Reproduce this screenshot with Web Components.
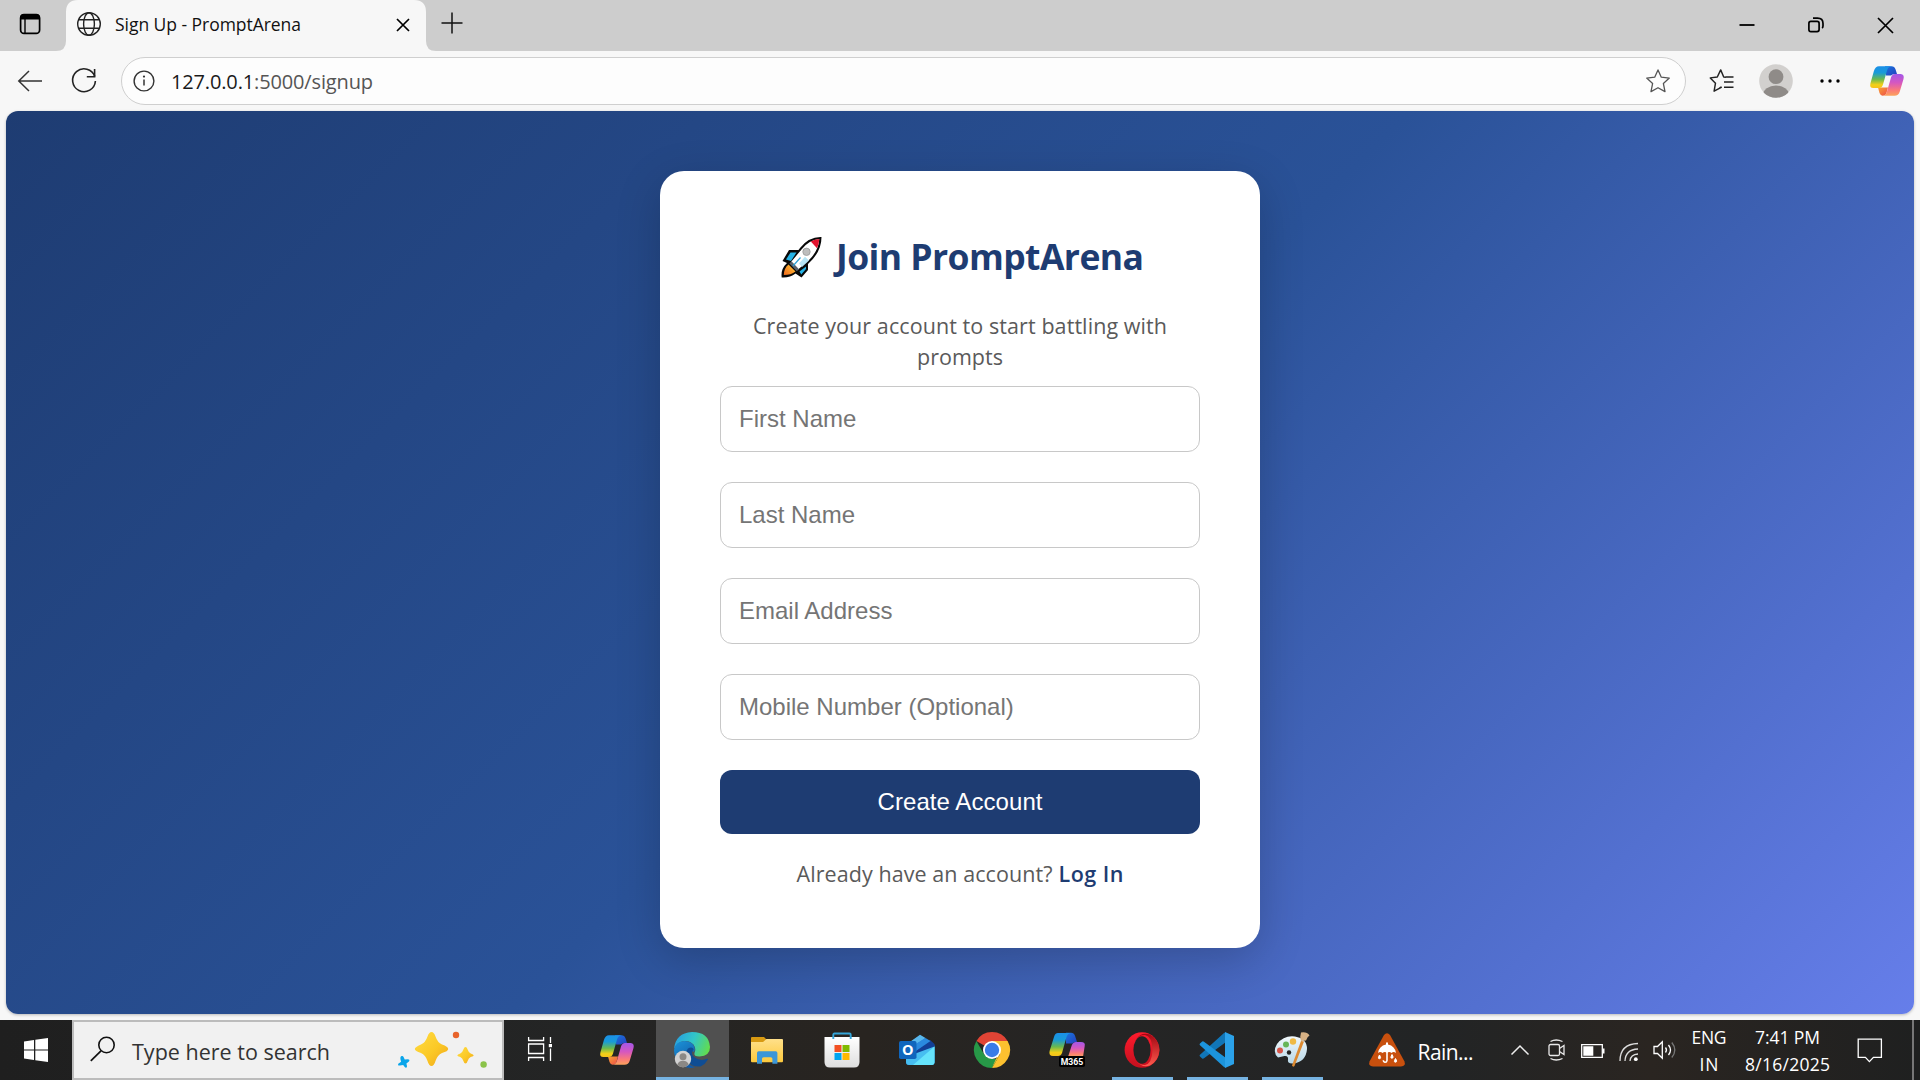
<!DOCTYPE html>
<html lang="en">
<head>
<meta charset="utf-8">
<title>Sign Up - PromptArena</title>
<style>
html,body{margin:0;height:100%;overflow:hidden}
body{font-family:"Open Sans","Noto Sans",sans-serif;background:#f7f7f7}
</style>
</head>
<body>
<app-desktop></app-desktop>
<script>
const mount = (el, html) => { el.attachShadow({mode:'open'}).innerHTML = html; };
const define = (name, html) => customElements.define(name, class extends HTMLElement {
  connectedCallback(){ if(!this.shadowRoot) mount(this, html); }
});

const copilotDefs = `<defs>
<linearGradient id="ca" x1="0" y1="0" x2="0" y2="1"><stop offset="0" stop-color="#1b8fe8"/><stop offset=".3" stop-color="#189bd8"/><stop offset=".6" stop-color="#6ab94e"/><stop offset=".85" stop-color="#f3d018"/><stop offset="1" stop-color="#f5c21b"/></linearGradient>
<linearGradient id="cb" x1="0" y1="0" x2="0" y2="1"><stop offset="0" stop-color="#a357e8"/><stop offset=".4" stop-color="#d557c0"/><stop offset=".75" stop-color="#fb7b78"/><stop offset="1" stop-color="#fba45c"/></linearGradient>
<linearGradient id="cc" x1="0" y1="0" x2="1" y2="1"><stop offset="0" stop-color="#1a75dc"/><stop offset="1" stop-color="#2440c0"/></linearGradient>
<linearGradient id="cd" x1="0" y1="0" x2="1" y2="1"><stop offset="0" stop-color="#f8a332"/><stop offset="1" stop-color="#ee4b4b"/></linearGradient></defs>`;

const I = {
tabs:[24,24,`<rect x="2.6" y="2.6" width="19" height="18.8" rx="3.4" fill="none" stroke="#000" stroke-width="1.7"/><path d="M2 7.500V5.500Q2 2 5.500 2h13Q22 2 22 5.500v2z"/><path d="M7 7v14" stroke="#000" stroke-width="1.400"/>`],
globe:[26,26,`<g fill="none" stroke="#222" stroke-width="1.4"><circle cx="13" cy="13" r="11.3"/><ellipse cx="13" cy="13" rx="5.400" ry="11.3"/><path d="M2.700 8.800h20.600M2.700 17.200h20.600"/></g>`],
x:[14,14,`<path d="M1 1l12 12M13 1L1 13" stroke="#000" stroke-width="1.700"/>`],
winx:[17,17,`<path d="M1 1l15 15M16 1L1 16" stroke="#000" stroke-width="1.7"/>`],
plus:[22,22,`<path d="M11 .5v21M.5 11h21" stroke="#111" stroke-width="1.500"/>`],
min:[16,16,`<path d="M.5 8h15" stroke="#000" stroke-width="1.8"/>`],
restore:[16,16,`<rect x=".9" y="4.400" width="10.200" height="10.200" rx="2" fill="none" stroke="#000" stroke-width="1.700"/><path d="M5 1.200h4.500Q15 1.200 15 6.500V9q0 1.500-1 2" fill="none" stroke="#000" stroke-width="1.700"/>`],
back:[26,22,`<path d="M25 11H1.500M12 1L1.800 11 12 21" fill="none" stroke="#333" stroke-width="1.500"/>`],
reload:[26,26,`<path d="M23.800 8.500A11.400 11.400 0 1 0 24.400 13" fill="none" stroke="#222" stroke-width="1.600"/><path d="M23.600 1v7.800h-7.800" fill="none" stroke="#222" stroke-width="1.600"/>`],
info:[22,22,`<circle cx="11" cy="11" r="9.900" fill="none" stroke="#333" stroke-width="1.400"/><path d="M11 9.500v6" stroke="#333" stroke-width="1.500"/><circle cx="11" cy="6.600" r="1.100" fill="#333"/>`],
star:[26,26,`<path d="M13 1.900l3.300 7.300 8 .9-5.900 5.500 1.600 8L13 19.700l-7 3.900 1.600-8L1.700 10.100l8-.9z" fill="none" stroke="#555" stroke-width="1.300" stroke-linejoin="round"/>`],
favs:[26,26,`<path d="M16.900 9.200l-2.200-.2-3-7.100-3.400 7.100-7 .9 5.200 5.300-1.400 8 6.200-3.400 1.500-.6M16.500 8.900h8M15 14h9.500M15 19.200h9.500M10.500 20l2-1.100" fill="none" stroke="#222" stroke-width="1.450" stroke-linejoin="round"/>`],
user:[34,34,`<defs><clipPath id="u"><circle cx="17" cy="17" r="16.800"/></clipPath></defs><g clip-path="url(#u)"><rect width="34" height="34" fill="#d2d0ce"/><circle cx="17" cy="12.700" r="7.400" fill="#8f8b88"/><ellipse cx="17" cy="31" rx="13" ry="9.500" fill="#8f8b88"/></g>`],
dots:[20,6,`<circle cx="2" cy="3" r="1.700"/><circle cx="10" cy="3" r="1.700"/><circle cx="18" cy="3" r="1.700"/>`],
copilot:[34,30,copilotDefs+`<path d="M15 .2h6.500q3 0 4 3L27 8h-2q-3 0-4 1.500H16z" fill="url(#cc)"/><path d="M8 21.500H18L16.500 27Q15.500 29.800 12.500 29.800 10.500 29.500 9.500 27z" fill="url(#cd)"/><path d="M21.800.2H9Q5.300.2 3.900 5L.4 17.500Q-.7 22 3.300 22H9q3 0 4-3.500L17 4.500Q18 .5 21.800.2z" fill="url(#ca)"/><path d="M12.500 29.800H24.500q4 0 5.300-4.300L33.500 13q1.200-4.500-2.800-5H25q-3 0-4 3.500L17 25.500q-1 4-4.500 4.300z" fill="url(#cb)"/>`],
m365:[36,36,copilotDefs+`<path d="M17 .8h5q3 0 4 3L28 10h-1.500q-2 0-3 1.500H17z" fill="url(#cc)"/><path d="M22 1H9Q6 1 5 5L.6 19Q-.5 24 4 24H9q3 0 4-3L17.500 5Q18.500 1.500 22 1z" fill="url(#ca)"/><path d="M19 25l3.700-11.500Q24 10 27 10h5q4.600 0 3.700 4L34 25z" fill="url(#cb)"/><rect x="10" y="24" width="26" height="11" rx="1.800" fill="#000"/><text x="23" y="32.700" text-anchor="middle" font-family="Roboto,sans-serif" font-weight="700" font-size="8.700" fill="#fff" textLength="22.500">M365</text>`],
win:[24,24,`<path d="M0 3.400L10 2v9.400H0zM11.300 1.700L24 0v11.400H11.300zM0 12.600h10V22L0 20.600zM11.300 12.600H24V24l-12.700-1.700z" fill="#fff"/>`],
search:[26,26,`<circle cx="16.500" cy="9" r="7.700" fill="none" stroke="#111" stroke-width="1.600"/><path d="M11 14.800L.8 24.800" stroke="#111" stroke-width="1.700"/>`],
sparkle:[92,38,`<defs><linearGradient id="s" x1="0" y1="0" x2="1" y2="1"><stop stop-color="#ffdc45"/><stop offset=".55" stop-color="#fbc926"/><stop offset="1" stop-color="#f0a51c"/></linearGradient></defs><path d="M35.500 1q2.500 0 4 4.500 2 6 6.500 8 6.200 2.200 6.200 4.500T46 22q-4.500 2-6.500 8-1.500 5-4 5t-4-5q-2-6-6.500-8-6.200-2.200-6.200-4T25 13.500q4.500-2 6.500-8 1.500-4.500 4-4.500z" fill="url(#s)"/><path d="M69.500 16q1.300 0 2 2.200 1.100 3.300 3.200 4.300 3 1 3 1.900t-3 1.700q-2.100 1-3.200 4.200-.7 2.200-2 2.200t-2-2.200q-1.100-3.200-3.200-4.200-3-.8-3-1.700t3-1.900q2.100-1 3.200-4.300.7-2.200 2-2.200z" fill="url(#s)"/><path d="M5.500 25q1.500-.5 2.200 1.200l1 2.300 3.300-.3q1.800 0 1.400 1.500-.3.800-1.400 1.600l-1.600 1.200.6 2.600q.2 1.700-1.200 1.600-.8-.2-1.700-1.400l-.9-1.300-3.200.6q-2 .2-2-1.200.2-.9 1.700-1.700l1.400-.9-.7-2.700Q4 25.500 5.500 25z" fill="#0aa5ea"/><circle cx="60" cy="4" r="3.200" fill="#e8642c"/><circle cx="87.600" cy="33.500" r="3.200" fill="#8bc34a"/>`],
taskview:[24,24,`<path d="M.6 0v3.500h15V0M.6 24v-3.500h15V24M.6 7h15v9.500H.600zM22.500 0v6M22.500 11.500V24" fill="none" stroke="#fff" stroke-width="1.300"/><rect x="20.800" y="7" width="3.200" height="3.200" fill="#fff"/>`],
edge:[36,36,`<defs><linearGradient id="e1" x1="0" y1=".3" x2="1" y2=".6"><stop stop-color="#279fe0"/><stop offset=".5" stop-color="#32c6c8"/><stop offset="1" stop-color="#62dc4e"/></linearGradient><linearGradient id="e2" x1="0" y1="0" x2=".5" y2="1"><stop stop-color="#1b93d8"/><stop offset="1" stop-color="#125ba8"/></linearGradient></defs><path d="M0 17Q1.500 1 18 0q17 0 18 15 0 9-10.500 9.500-6 0-5-3.500 1.500-2.500.5-5.500-2-6-9.500-6.500Q4 9 0 17z" fill="url(#e1)"/><path d="M0 18Q1 9.500 10.500 9q8 .5 10 6 .9 3-.5 5-7-4.500-9 3-1 8 10 12.500Q7 38 1.500 25.500 0 22 0 18z" fill="url(#e2)"/><path d="M14 16.500q-4 5-1.500 10.500 4 8.500 14 7.500 5-2.500 7.500-7 0-1-1-.7-7 3-13-1.800-3-3-1.500-6 2-1.500.5-2.800-2-1.500-5 .3z" fill="#0f4d94"/><circle cx="9" cy="27" r="8.200" fill="#d2d2d2"/><circle cx="9" cy="24.800" r="3.500" fill="#8b8885"/><path d="M3.200 32.800q1.300-4 5.800-4t5.800 4Q9 38 3.200 32.800z" fill="#8b8885"/>`],
folder:[32,27,`<defs><linearGradient id="f" x1="0" y1="0" x2="0" y2="1"><stop stop-color="#ffe08a"/><stop offset="1" stop-color="#fdc93c"/></linearGradient></defs><path d="M1 0h12l3 3-3 6H0V1q0-1 1-1z" fill="#d89a12"/><path d="M0 5h12l3.500-3H31q1 0 1 1v21q0 1.300-1 1.300H1Q0 25.300 0 24z" fill="url(#f)"/><path d="M6 26.800V16q0-1.700 1.700-1.700h17q1.700 0 1.700 1.700v10.800h-5v-5q0-1.600-1.600-1.600h-7.200q-1.600 0-1.600 1.600v5z" fill="#3c96d8"/>`],
store:[36,36,`<defs><linearGradient id="st" x1="0" y1="0" x2="0" y2="1"><stop stop-color="#fff"/><stop offset="1" stop-color="#dedede"/></linearGradient></defs><path d="M.5 5h35v25q0 5.500-5.500 5.500H6Q.5 35.500.5 30z" fill="url(#st)"/><path d="M9.300 7V2.700q0-1.200 1.200-1.200h15q1.200 0 1.200 1.200V7" fill="none" stroke="#35a5d8" stroke-width="1.900"/><path d="M10.500 13h7v7h-7z" fill="#f25022"/><path d="M18.500 13h7v7h-7z" fill="#7fba00"/><path d="M10.500 21h7v7h-7z" fill="#00a4ef"/><path d="M18.500 21h7v7h-7z" fill="#ffb900"/>`],
outlook:[36,32,`<path d="M7 11L21 1.500 35.500 11V28q0 3-3 3H10q-3 0-3-3z" fill="#1a6fc4"/><path d="M8 10L21 .800 26.500 4 9 16z" fill="#58b7ec"/><path d="M10 19L31 6l4.500 4v3L16 25z" fill="#123f96"/><path d="M10 14L26.500 4l5 3L14 19z" fill="#2a8adf"/><path d="M7 23L35.500 12.500V28q0 3-3 3H10q-3 0-3-3z" fill="#47bdf0"/><path d="M35.500 12.500V28q0 3-3 3H14z" fill="#65e3fb"/><rect x="0" y="7" width="17.500" height="18" rx="1.800" fill="#1066bd"/><text x="8.800" y="21.300" text-anchor="middle" font-size="14.500" font-weight="700" fill="#fff">O</text>`],
chrome:[36,36,`<path d="M18 18L2.400 9A18 18 0 0 1 33.600 9z" fill="#e04435"/><path d="M18 9h15.600A18 18 0 0 1 18 36l7.800-13.500z" fill="#fdc12f"/><path d="M2.400 9l7.800 13.500L18 27h5.200L18 36A18 18 0 0 1 2.400 9z" fill="#279847"/><path d="M25.800 22.500L18 36h-.1l5-11z" fill="#fdc12f"/><circle cx="18" cy="18" r="9" fill="#fff"/><circle cx="18" cy="18" r="7.200" fill="#3a7be8"/>`],
opera:[36,36,`<defs><linearGradient id="o" x1="0" y1="0" x2="0" y2="1"><stop stop-color="#ff1b2d"/><stop offset="1" stop-color="#c4101e"/></linearGradient><linearGradient id="o2" x1="0" y1="0" x2="0" y2="1"><stop stop-color="#a10612"/><stop offset="1" stop-color="#ff5a4e"/></linearGradient></defs><ellipse cx="18" cy="18" rx="17.400" ry="17.800" fill="url(#o)"/><path d="M12 7.500Q16 2.600 21 3q7 1.500 7.500 15Q28 31.500 21 33q-5 .4-9-4.500Q18 36.500 26 33.500q9-5 9.400-15.500Q35 7.500 26 2.500 17-.500 12 7.500z" fill="url(#o2)"/><ellipse cx="18" cy="18" rx="8.600" ry="13.700" fill="#242424"/>`],
vscode:[36,36,`<path d="M1 24.400l2.200 2q.8.600 1.800-.1L27 10V1.500Q26.500 0 25 1L1 22.700q-1 .9 0 1.700z" fill="#1176b8"/><path d="M1 11.600l2.200-2Q4 9 5 9.700L27 26v8.500q-.500 1.500-2 .500L1 13.300q-1-.9 0-1.700z" fill="#1c94dc"/><path d="M26 0l9 4v28l-9 4z" fill="#2ba2ea"/>`],
paint:[36,36,`<defs><linearGradient id="p" x1="0" y1="0" x2="0" y2="1"><stop stop-color="#f1f8fc"/><stop offset="1" stop-color="#b9d8e8"/></linearGradient></defs><path d="M3 12Q10 3 21 4.500q12 2 12 12.500-1 13-14 14.500-6 .3-5-4 .5-4-3.500-3.500L4 25.500Q-2 20 3 12z" fill="url(#p)"/><circle cx="6" cy="18.500" r="3" fill="#d8564a"/><circle cx="12" cy="12.500" r="3" fill="#67b559"/><circle cx="19" cy="9.500" r="3.200" fill="#efb944"/><circle cx="15" cy="20.500" r="2.200" fill="#222"/><path d="M27 9l3 .500L20.500 34q-1.500 1.500-2.500-.500z" fill="#dc8a32"/><path d="M27 .5q6-1 8.500 3-2 1-3.500 5l-5 .5q-1.500-4 0-8.500z" fill="#d6b184"/>`],
rain:[36,34,`<path d="M15 2q3-3.500 6 0l14.500 26.500Q37 33 32 33.500H4Q-1 33 .5 28.500z" fill="#c8500e"/><path d="M9 20q1-7 8-8.500V9.500h2v2q7 1.500 8 8.500-2.500-1.800-4.500 0-2.300-1.800-4.500 0-2.200-1.800-4.500 0-2.300-1.800-4.500 0z" fill="#fff"/><path d="M18 19v8.500q-.3 2-2.200 1.800-1.500-.3-1.500-2" fill="none" stroke="#fff" stroke-width="1.600"/><path d="M10.500 22q2.200 3.500 0 3.700t0-3.700zM23 21.500q2.200 3.500 0 3.700t0-3.700zM26.500 25.500q2.200 3.500 0 3.700t0-3.700z" stroke="#fff" fill="#fff"/>`],
up:[20,12,`<path d="M1.500 10.500L10 2l8.500 8.500" fill="none" stroke="#eee" stroke-width="1.500"/>`],
cam:[18,24,`<g fill="none" stroke="#e8e8e8" stroke-width="1.300"><rect x="1" y="6.500" width="10.500" height="11" rx="1.500"/><path d="M11.500 10.500L16 7.500v9l-4.500-3M2.500 3.500Q8 .5 14.500 3.500M2.500 20.500Q8 23.500 14.500 20.500"/></g>`],
bat:[24,14,`<path d="M.7.700h20.600v12.600H.700z" fill="none" stroke="#fff" stroke-width="1.300"/><path d="M2.300 2.300h10v9.400h-10zM21.500 4.500H23.500v5h-2z" fill="#fff"/>`],
wifi:[20,20,`<g fill="none" stroke="#ddd" stroke-width="1.300"><path d="M1 19Q1 2 19 1.500M6 19Q6.500 7.500 19 7M11 19q.5-6.500 8-7"/></g><circle cx="16.800" cy="17.200" r="1.900" fill="#fff"/>`],
vol:[24,20,`<g fill="none" stroke="#fff" stroke-width="1.300"><path d="M1 6.500h3.500L9.300 1.700v16.600L4.500 13.500H1z"/><path d="M12.500 7.500q2 2.500 0 5M15.500 5q4 5 0 10"/><path d="M18.800 2.500q6 7.500 0 15" stroke="#777"/></g>`],
note:[26,26,`<path d="M1.200 1.200h23.200v18.200h-8l-4 4.200-4-4.200H1.200z" fill="none" stroke="#fff" stroke-width="1.300"/>`],
rocket:[41,42,`<defs><linearGradient id="r" x1="1" y1="0" x2="0" y2="1"><stop stop-color="#ffca38"/><stop offset="1" stop-color="#f26a1b"/></linearGradient></defs><path d="M40.500 1Q28 .5 19 12l-1.500 2H8L1.500 25l4.500 2Q-.5 33 .7 41.500 9 42 14.500 37.500l6 4 6.500-7.500v-6Q40.500 16 40.500 1z" fill="#080808"/><path d="M2.800 39Q3 32 7.500 28.500l7 7Q10 39 2.800 39z" fill="url(#r)"/><path d="M5 23.500L9.500 16.500h6L10 25z" fill="#25b3e6"/><path d="M18.500 35.500L25 30.500v2.500l-4.700 5.500z" fill="#25b3e6"/><path d="M38.300 3.100Q28 4 20.500 13.500L9.800 26.200l7 7.500L28 24Q37.500 15 38.300 3.100z" fill="#fff"/><path d="M38.300 3.100Q33.500 3.200 29.800 5.600L36 12.300Q38 8 38.300 3.100z" fill="#e2122d"/><path d="M10.500 25.300l7.500 8-2.200 2-7.400-7.800z" fill="#58616b"/><path d="M21 31l7-6.500-4-3.700-6 6.700z" fill="#b6e4f5"/><path d="M19.500 21.500L12 30" stroke="#2d9fd4" stroke-width="1.200"/><circle cx="25.500" cy="15.800" r="3.700" fill="#bdbdbd" stroke="#999" stroke-width=".8"/>`]
};

customElements.define('ui-icon', class extends HTMLElement {
  connectedCallback(){
    if(this.shadowRoot) return;
    const [w,h,s] = I[this.getAttribute('name')];
    mount(this, `<style>:host{display:block;flex:none;width:${w}px;height:${h}px}svg{display:block;overflow:visible}</style><svg width="${w}" height="${h}" viewBox="0 0 ${w} ${h}">${s}</svg>`);
  }
});

define('browser-tabs', `<style>
:host{display:flex;height:51px;background:#cdcdcd;align-items:flex-start}
.menu{width:56px;padding:12px 0 0 18px;box-sizing:border-box}
.tab{width:380px;height:51px;box-sizing:border-box;background:#f7f7f7;display:flex;padding:0 26px 0 20px;
 clip-path:path('M0 51Q10 51 10 41V12Q10 0 22 0H358Q370 0 370 12V41Q370 51 380 51Z')}
.tab ui-icon[name=globe]{margin-top:11px}
.t{font-size:17.500px;line-height:24px;color:#111;margin:12px auto 0 13px}
.tab ui-icon[name=x]{margin:18px 0 0}
.plus{margin:12px auto 0 5px}
.w{display:flex;padding-right:26px;gap:53px}
.w ui-icon{margin-top:17px}
</style>
<div class="menu"><ui-icon name="tabs"></ui-icon></div>
<div class="tab"><ui-icon name="globe"></ui-icon><div class="t"><fit-text w="186">Sign Up - PromptArena</fit-text></div><ui-icon name="x"></ui-icon></div>
<ui-icon class="plus" name="plus"></ui-icon>
<div class="w"><ui-icon name="min"></ui-icon><ui-icon name="restore"></ui-icon><ui-icon name="winx"></ui-icon></div>`);

define('browser-toolbar', `<style>
:host{display:flex;height:60px;background:#f7f7f7;align-items:center;box-sizing:border-box;padding:0 16px 0 17px}
.r{margin:0 24px 0 28px}
.bar{flex:1;height:48px;border:1.500px solid #cfcfcf;border-radius:25px;background:#fdfdfd;display:flex;align-items:center;padding:0 14px 0 11px;box-sizing:border-box}
.u{font-size:20px;line-height:28px;color:#555;margin:1px auto 0 16px}
b{font-weight:400;color:#1a1a1a}
.f{margin:0 24px 0 23px}
.d{margin:0 30px 0 27px}
</style>
<ui-icon name="back"></ui-icon><ui-icon class="r" name="reload"></ui-icon>
<div class="bar"><ui-icon name="info"></ui-icon><div class="u"><fit-text w="202"><b>127.0.0.1</b>:5000/signup</fit-text></div><ui-icon name="star"></ui-icon></div>
<ui-icon class="f" name="favs"></ui-icon><ui-icon name="user"></ui-icon><ui-icon class="d" name="dots"></ui-icon><ui-icon name="copilot"></ui-icon>`);

customElements.define('form-field', class extends HTMLElement {
  connectedCallback(){
    if(this.shadowRoot) return;
    mount(this, `<style>:host{display:flex;align-items:center;height:66px;box-sizing:border-box;border:1px solid #c8c8c8;border-radius:12px;padding:0 18px;font:24px "Liberation Sans",Arial,sans-serif;color:#757575;background:#fff}</style><slot></slot>`);
  }
});

define('primary-button', `<style>:host{display:flex;align-items:center;justify-content:center;height:64px;border-radius:12px;background:#1e3c72;color:#fff;font:24px "Liberation Sans",Arial,sans-serif}</style><slot></slot>`);

define('signup-card', `<style>
:host{display:flex;flex-direction:column;box-sizing:border-box;width:600px;height:777px;padding:60px 60px 0;background:#fff;border-radius:24px;box-shadow:0 12px 45px rgba(0,0,0,.2)}
h1{display:flex;flex:none;justify-content:center;gap:14px;margin:5px 0 0;padding-left:5px;height:48px;font-size:35.500px;line-height:48px;font-weight:700;color:#1e3c72}
h1 fit-text{margin-top:-4px}
p{margin:26px 0 14px;text-align:center;font-size:21.500px;line-height:31px;color:#5a5a5a}
.fields{display:flex;flex-direction:column;gap:30px}
.alt{margin-top:25px;text-align:center;font-size:21.500px;line-height:30px;color:#5a5a5a;display:flex;justify-content:center;gap:6px}
.alt a{color:#1e3c72;font-weight:600}
</style>
<h1><ui-icon name="rocket"></ui-icon><fit-text w="308">Join PromptArena</fit-text></h1>
<p><fit-text w="414">Create your account to start battling with</fit-text><br><fit-text w="86">prompts</fit-text></p>
<div class="fields">
<form-field>First Name</form-field><form-field>Last Name</form-field><form-field>Email Address</form-field><form-field>Mobile Number (Optional)</form-field>
<primary-button><fit-text w="165">Create Account</fit-text></primary-button></div>
<div class="alt"><fit-text w="256">Already have an account?</fit-text><a><fit-text w="65">Log In</fit-text></a></div>`);

define('page-view', `<style>
:host{display:block;height:909px;box-sizing:border-box;padding:0 6px 6px;background:#f7f7f7}
.bg{height:903px;border-radius:12px;overflow:hidden;display:flex;justify-content:center;align-items:flex-start;padding-top:60px;box-sizing:border-box;background:linear-gradient(135deg,#1e3c72 0%,#2a5298 50%,#667eea 100%);box-shadow:0 1px 3px rgba(0,0,0,.25)}
</style><div class="bg"><signup-card></signup-card></div>`);

customElements.define('task-item', class extends HTMLElement {
  connectedCallback(){
    if(this.shadowRoot) return;
    mount(this, `<style>:host{display:flex;flex:none;width:75px;height:60px;justify-content:center;align-items:center;box-sizing:border-box}
    .s{display:flex;align-items:center;justify-content:center;height:60px;box-sizing:border-box;width:61px;border-bottom:3px solid transparent}
    :host([open]) .s{border-color:#76b3e2}
    :host([active]) .s{width:73px;background:#505050;border-color:#76b3e2}</style><div class="s"><slot></slot></div>`);
  }
});

define('task-bar', `<style>
:host{display:flex;height:60px;background:linear-gradient(90deg,#1f1f1f,#242525 30%,#282420 45%,#252525 58%,#222425 75%,#2a2521 86%,#1f2020);color:#fff;align-items:center}
.start{width:72px;display:flex;justify-content:center}
.search{width:432px;height:60px;box-sizing:border-box;border:2px solid #bcbcbc;background:#f1f1f1;display:flex;align-items:center;padding:0 14px 0 16px;color:#333}
.search ui-icon[name=search]{margin-bottom:2px}
.q{font-size:21.500px;line-height:30px;margin:3px auto 0 16px}
.rain{margin-left:39px}
.wt{font-size:21px;line-height:30px;margin:3px 0 0 13px;width:56px}
.tray{display:flex;align-items:center;margin-left:36px}
.two{display:flex;flex-direction:column;align-items:center;font-size:17.500px;line-height:27px;margin-top:1px}
.end{width:2px;height:60px;background:#777;margin-left:auto;margin-right:6px}
</style>
<div class="start"><ui-icon name="win"></ui-icon></div>
<div class="search"><ui-icon name="search"></ui-icon><div class="q"><fit-text w="198">Type here to search</fit-text></div><ui-icon name="sparkle"></ui-icon></div>
<task-item style="width:75.500px"><ui-icon name="taskview" style="margin-right:3px"></ui-icon></task-item>
<task-item><ui-icon name="copilot" style="margin-top:2px"></ui-icon></task-item>
<task-item active><ui-icon name="edge" style="margin-top:3px"></ui-icon></task-item>
<task-item><ui-icon name="folder" style="margin-top:4px"></ui-icon></task-item>
<task-item><ui-icon name="store" style="margin-top:3px"></ui-icon></task-item>
<task-item><ui-icon name="outlook" style="margin-top:3px"></ui-icon></task-item>
<task-item><ui-icon name="chrome" style="margin-top:3px"></ui-icon></task-item>
<task-item><ui-icon name="m365" style="margin-top:3px"></ui-icon></task-item>
<task-item open><ui-icon name="opera" style="margin-top:3px"></ui-icon></task-item>
<task-item open><ui-icon name="vscode" style="margin-top:3px"></ui-icon></task-item>
<task-item open><ui-icon name="paint" style="margin-top:3px"></ui-icon></task-item>
<ui-icon class="rain" name="rain"></ui-icon><div class="wt"><fit-text w="56">Rain...</fit-text></div>
<div class="tray"><ui-icon name="up"></ui-icon><ui-icon name="cam" style="margin-left:18px"></ui-icon><ui-icon name="bat" style="margin:1px 0 0 15px"></ui-icon><ui-icon name="wifi" style="margin:3px 0 0 14px"></ui-icon><ui-icon name="vol" style="margin-left:14px"></ui-icon></div>
<div class="two" style="margin-left:15px;width:35px"><fit-text w="35">ENG</fit-text><fit-text w="19">IN</fit-text></div>
<div class="two" style="margin-left:17px;width:88px"><fit-text w="65">7:41 PM</fit-text><fit-text w="85">8/16/2025</fit-text></div>
<ui-icon name="note" style="margin:1px 0 0 25px"></ui-icon>
<div class="end"></div>`);

define('app-desktop', `<style>:host{display:flex;flex-direction:column;width:1920px;height:1080px;overflow:hidden}</style>
<browser-tabs></browser-tabs><browser-toolbar></browser-toolbar><page-view></page-view><task-bar></task-bar>`);

/* Spreads its text over the width in the w attribute by adjusting letter spacing. */
customElements.define('fit-text', class extends HTMLElement {
  connectedCallback(){
    if(this.shadowRoot) return;
    mount(this, `<style>:host{display:inline-block;white-space:nowrap}</style><slot></slot>`);
    const ls = (+this.getAttribute('w') - this.getBoundingClientRect().width) / (this.textContent.length - 1);
    this.style.letterSpacing = ls + 'px';
    this.style.marginRight = -ls + 'px';
  }
});
</script>
</body>
</html>
